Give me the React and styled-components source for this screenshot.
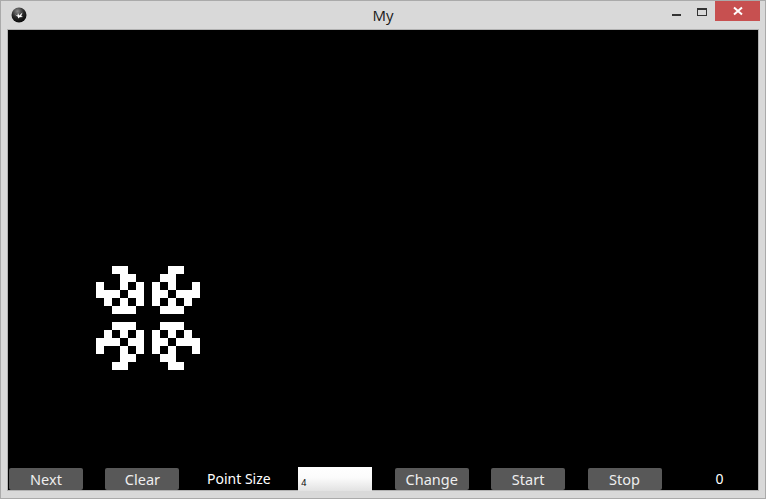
import React from "react";
import styled, { createGlobalStyle } from "styled-components";

const GlobalStyle = createGlobalStyle`
  html, body {
    margin: 0;
    padding: 0;
    background: #d9d9d9;
    overflow: hidden;
  }
  * { box-sizing: border-box; }
`;

const Window = styled.div`
  width: 766px;
  height: 499px;
  border: 1px solid #aaaaaa;
  background: #d9d9d9;
  display: flex;
  flex-direction: column;
`;

const TitleBar = styled.div`
  height: 28px;
  display: grid;
  grid-template-columns: 1fr auto 1fr;
  align-items: start;
`;

const AppIcon = styled.div`
  padding: 6px 0 0 10px;
  height: 28px;
  display: flex;
  align-items: flex-start;
`;

const Title = styled.div`
  font-family: "Open Sans", "Noto Sans", sans-serif;
  font-size: 15px;
  line-height: 28px;
  color: #1a1a1a;
`;

const Controls = styled.div`
  display: flex;
  justify-content: flex-end;
  padding-right: 5px;
`;

const CtrlButton = styled.div`
  width: ${(p) => (p.$close ? 45 : 26)}px;
  height: 20px;
  background: ${(p) => (p.$close ? "#c75050" : "transparent")};
  display: flex;
  align-items: center;
  justify-content: center;
`;

const Frame = styled.div`
  flex: 1;
  padding: 0 6px 7px 6px;
  display: flex;
`;

const Client = styled.div`
  flex: 1;
  border: 1px solid #b2b2b2;
  background: #000;
  display: flex;
  flex-direction: column;
`;

const Canvas = styled.div`
  flex: 1;
  position: relative;
`;

const Pattern = styled.svg`
  position: absolute;
  left: 88px;
  top: 236px;
`;

const ControlRow = styled.div`
  height: 24px;
  margin-bottom: -1px;
  padding-left: 1px;
  display: flex;
  justify-content: space-between;
  align-items: flex-start;
  position: relative;
`;

const KButton = styled.div`
  width: 74px;
  height: 22px;
  margin-top: 1px;
  background: #585858;
  border-radius: 2px;
  color: #eeeeee;
  font-family: "Noto Sans", sans-serif;
  font-size: 14.5px;
  line-height: 22px;
  text-align: center;
  white-space: nowrap;
`;

const KLabel = styled.div`
  width: 74px;
  height: 22px;
  margin-top: 1px;
  color: #ffffff;
  font-family: "Noto Sans", sans-serif;
  font-size: 14px;
  line-height: 22px;
  text-align: center;
  white-space: nowrap;
`;

const CountLabel = styled(KLabel)`
  padding-right: 3px;
`;

const KInput = styled.input`
  width: 74px;
  height: 24px;
  border: none;
  outline: none;
  margin: 0;
  padding: 6px 0 0 3px;
  background: linear-gradient(#ffffff 0%, #fbfbfb 45%, #e2e2e2 100%);
  font-family: "Noto Sans", sans-serif;
  font-size: 9px;
  color: #000;
`;

const Q = [
  "..XX..",
  "...XX.",
  "X..X.X",
  "XXX.XX",
  ".X.X.X",
  "..XXX.",
];

const idx = (i) => (i <= 5 ? i : i >= 7 ? 12 - i : -1);

const cells = [];
for (let r = 0; r < 13; r++) {
  for (let c = 0; c < 13; c++) {
    const rr = idx(r);
    const cc = idx(c);
    if (rr >= 0 && cc >= 0 && Q[rr][cc] === "X") cells.push([c, r]);
  }
}

function KivyLogo() {
  return (
    <svg width="16" height="16" viewBox="0 0 16 16">
      <defs>
        <radialGradient id="kg" cx="40%" cy="25%" r="75%">
          <stop offset="0%" stopColor="#8a8a8a" />
          <stop offset="55%" stopColor="#2a2a2a" />
          <stop offset="100%" stopColor="#0a0a0a" />
        </radialGradient>
      </defs>
      <circle cx="8" cy="8" r="7.5" fill="url(#kg)" />
      <path
        d="M4 7.5 L6.5 8.5 L7 6 L8.2 8.6 L11.5 5.5 L10.2 9 L12 10 L8.5 10.2 L7.5 11.5 L6.6 9.6 Z"
        fill="#ffffff"
      />
    </svg>
  );
}

export default function App() {
  return (
    <>
      <GlobalStyle />
      <Window>
        <TitleBar>
          <AppIcon>
            <KivyLogo />
          </AppIcon>
          <Title>My</Title>
          <Controls>
            <CtrlButton>
              <svg width="10" height="16" viewBox="0 0 10 16">
                <rect x="1" y="11" width="9" height="2" fill="#333" />
              </svg>
            </CtrlButton>
            <CtrlButton>
              <svg width="12" height="16" viewBox="0 0 12 16">
                <rect x="1.5" y="5.5" width="9" height="7" fill="none" stroke="#333" strokeWidth="1" />
                <rect x="1" y="5" width="10" height="2" fill="#333" />
              </svg>
            </CtrlButton>
            <CtrlButton $close>
              <svg width="10" height="10" viewBox="0 0 10 10">
                <path d="M1 1.5 L9 8.5 M9 1.5 L1 8.5" stroke="#fff" strokeWidth="2" />
              </svg>
            </CtrlButton>
          </Controls>
        </TitleBar>
        <Frame>
          <Client>
            <Canvas>
              <Pattern width="104" height="104" viewBox="0 0 104 104" shapeRendering="crispEdges">
                {cells.map(([c, r]) => (
                  <rect key={`${c}-${r}`} x={c * 8} y={r * 8} width="8" height="8" fill="#fff" />
                ))}
              </Pattern>
            </Canvas>
            <ControlRow>
              <KButton>Next</KButton>
              <KButton>Clear</KButton>
              <KLabel>Point Size</KLabel>
              <KInput defaultValue="4" readOnly />
              <KButton>Change</KButton>
              <KButton>Start</KButton>
              <KButton>Stop</KButton>
              <CountLabel>0</CountLabel>
            </ControlRow>
          </Client>
        </Frame>
      </Window>
    </>
  );
}
